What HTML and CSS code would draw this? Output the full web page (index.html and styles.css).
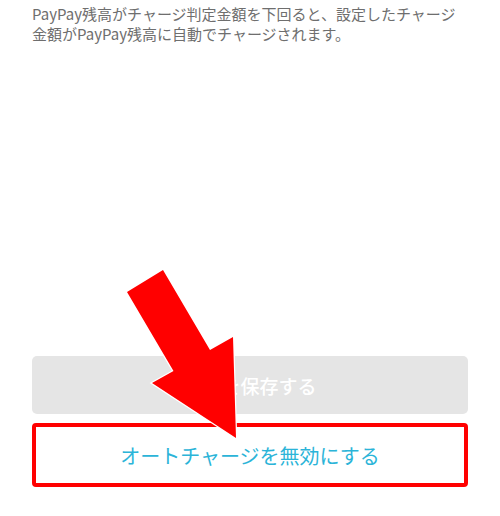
FILE: index.html
```html
<!DOCTYPE html>
<html lang="ja">
<head>
<meta charset="utf-8">
<link rel="stylesheet" href="styles.css">
</head>
<body>
<div class="page">
  <p class="desc">PayPay残高がチャージ判定金額を下回ると、設定したチャージ金額がPayPay残高に自動でチャージされます。</p>
  <div class="actions">
    <button class="btn btn-save">設定を保存する</button>
    <div class="highlight">
      <button class="btn btn-disable">オートチャージを無効にする</button>
    </div>
  </div>
  <svg class="arrow" width="500" height="516" viewBox="0 0 500 516">
    <polygon points="127,292 163,270 210,350 233,337 236,438 152,383 173.5,371" fill="#ff0000" stroke="#ffffff" stroke-width="2.5" stroke-linejoin="miter" paint-order="stroke"/>
  </svg>
</div>
</body>
</html>
```
FILE: styles.css
```css
* { box-sizing: border-box; }
html, body { margin: 0; padding: 0; background: #ffffff; }
body {
  font-family: "Noto Sans CJK JP", "Noto Sans", sans-serif;
}
.page {
  position: relative;
  width: 500px;
  height: 516px;
  padding: 4px 32px 29px;
  display: flex;
  flex-direction: column;
}
.desc {
  margin: 0;
  font-size: 15px;
  line-height: 20px;
  color: #6e6e6e;
}
.actions {
  margin-top: auto;
  display: flex;
  flex-direction: column;
  gap: 9px;
}
.btn {
  display: block;
  width: 100%;
  border: 0;
  font-family: inherit;
  font-size: 19px;
  padding: 0;
}
.btn-save {
  height: 58px;
  border-radius: 5px;
  background: #e5e5e5;
  color: #ffffff;
  font-weight: 500;
}
.highlight {
  border: 4px solid #ff0000;
  border-radius: 4px;
  height: 64px;
}
.btn-disable {
  height: 56px;
  background: #ffffff;
  color: #2bb4d8;
  font-size: 20px;
  font-weight: 400;
}
.arrow {
  position: absolute;
  top: 0;
  left: 0;
}
```
